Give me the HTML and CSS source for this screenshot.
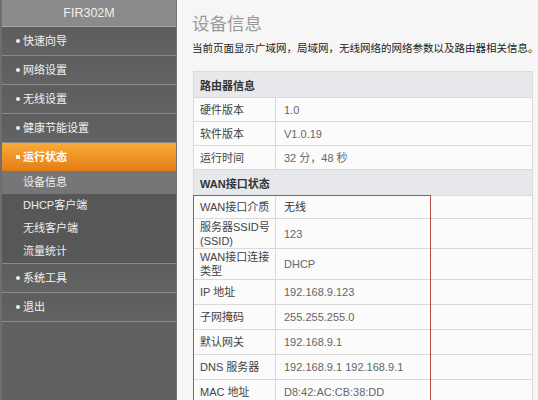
FILE: index.html
```html
<!DOCTYPE html>
<html lang="zh">
<head>
<meta charset="utf-8">
<title>设备信息</title>
<link rel="stylesheet" href="styles.css">
</head>
<body>
<div class="page">
  <aside class="sidebar">
    <div class="brand">FIR302M</div>
    <ul class="menu">
      <li class="item"><span class="dot"></span>快速向导</li>
      <li class="item"><span class="dot"></span>网络设置</li>
      <li class="item"><span class="dot"></span>无线设置</li>
      <li class="item"><span class="dot"></span>健康节能设置</li>
      <li class="item active"><span class="sq"></span>运行状态</li>
      <li class="sub current">设备信息</li>
      <li class="sub">DHCP客户端</li>
      <li class="sub">无线客户端</li>
      <li class="sub last">流量统计</li>
      <li class="item"><span class="dot"></span>系统工具</li>
      <li class="item"><span class="dot"></span>退出</li>
    </ul>
  </aside>
  <main class="content">
    <h1 class="title">设备信息</h1>
    <p class="desc">当前页面显示广域网，局域网，无线网络的网络参数以及路由器相关信息。</p>
    <div class="tablewrap">
      <table class="info">
        <colgroup><col class="c1"><col class="c2"></colgroup>
        <tr class="head"><th colspan="2">路由器信息</th></tr>
        <tr><td class="k">硬件版本</td><td class="v">1.0</td></tr>
        <tr><td class="k">软件版本</td><td class="v">V1.0.19</td></tr>
        <tr><td class="k">运行时间</td><td class="v">32 分，48 秒</td></tr>
        <tr class="head"><th colspan="2">WAN接口状态</th></tr>
        <tr class="r23"><td class="k">WAN接口介质</td><td class="v dark">无线</td></tr>
        <tr class="r30"><td class="k">服务器SSID号<br>(SSID)</td><td class="v">123</td></tr>
        <tr class="r31"><td class="k">WAN接口连接<br>类型</td><td class="v">DHCP</td></tr>
        <tr class="r25"><td class="k">IP 地址</td><td class="v">192.168.9.123</td></tr>
        <tr class="r25"><td class="k">子网掩码</td><td class="v">255.255.255.0</td></tr>
        <tr class="r25"><td class="k">默认网关</td><td class="v">192.168.9.1</td></tr>
        <tr class="r25"><td class="k">DNS 服务器</td><td class="v">192.168.9.1 192.168.9.1</td></tr>
        <tr class="r25"><td class="k">MAC 地址</td><td class="v">D8:42:AC:CB:38:DD</td></tr>
      </table>
      <div class="highlight"></div>
    </div>
  </main>
</div>
</body>
</html>
```
FILE: styles.css
```css
html, body {
  margin: 0;
  padding: 0;
}
body {
  width: 538px;
  height: 400px;
  overflow: hidden;
  background: #f6f6f6;
  font-family: "Liberation Sans", "Noto Sans CJK SC", sans-serif;
  font-size: 11px;
}
.page {
  display: flex;
  height: 400px;
}
.sidebar {
  width: 174px;
  flex: none;
  background: #616161;
  border-left: 2px solid #6e6e6e;
  border-right: 1px solid #717171;
  color: #f2f2f2;
}
.brand {
  height: 26px;
  line-height: 27px;
  background: #8b8b8b;
  border-bottom: 1px solid #a3a3a3;
  text-align: center;
  font-size: 12.5px;
  color: #f0f0f0;
}
.menu {
  list-style: none;
  margin: 0;
  padding: 0;
}
.item {
  height: 28px;
  line-height: 27px;
  border-bottom: 1px solid #8a8a8a;
  background: linear-gradient(#5d5d5d, #636363);
  padding-left: 14px;
  display: flex;
  align-items: center;
  font-size: 11px;
}
.dot {
  width: 4px;
  height: 4px;
  border-radius: 50%;
  background: #eee;
  margin-right: 3px;
}
.item.active {
  background: linear-gradient(#f7aa3a, #e57d14);
  border-bottom: none;
  font-weight: bold;
  color: #fff;
  height: 28px;
}
.sq {
  width: 4px;
  height: 4px;
  background: #fff2dc;
  margin-right: 3px;
}
.sub {
  height: 23px;
  line-height: 23px;
  padding-left: 21px;
  background: #575757;
  color: #eee;
  font-size: 11px;
}
.sub.current {
  background: #767676;
}
.sub.last {
  border-bottom: 1px solid #8a8a8a;
}
.content {
  flex: 1;
  padding: 13px 0 0 15px;
  min-width: 0;
}
.title {
  margin: 0;
  font-size: 17.5px;
  font-weight: normal;
  color: #9a9a9a;
  line-height: 22px;
}
.desc {
  margin: 5px 0 0 0;
  color: #222;
  font-size: 10.5px;
  line-height: 16px;
  white-space: nowrap;
}
.tablewrap {
  position: relative;
  margin-top: 15px;
  margin-left: 1px;
  width: 339px;
}
.info {
  width: 339px;
  table-layout: fixed;
  border-collapse: collapse;
  background: #fbfbfb;
}
.c1 { width: 82px; }
.c2 { width: 257px; }
.info th, .info td {
  border: 1px solid #dadada;
  text-align: left;
  padding: 0 6px;
  font-size: 11px;
  white-space: nowrap;
  overflow: hidden;
}
.head th {
  height: 25px;
  background: #e6e8ec;
  color: #333;
  font-weight: bold;
}
.info td {
  height: 23px;
  line-height: 14px;
}
.info td.v {
  padding-left: 8px;
}
.k {
  color: #444;
}
.v {
  color: #666;
}
.v.dark {
  color: #333;
}
.r23 td { height: 22px; }
.r30 td { height: 29px; }
.r31 td { height: 30px; }
.r25 td { height: 24px; }
.highlight {
  position: absolute;
  left: 0;
  top: 124px;
  width: 236px;
  height: 220px;
  border: 1px solid #c04a44;
  pointer-events: none;
}
```
